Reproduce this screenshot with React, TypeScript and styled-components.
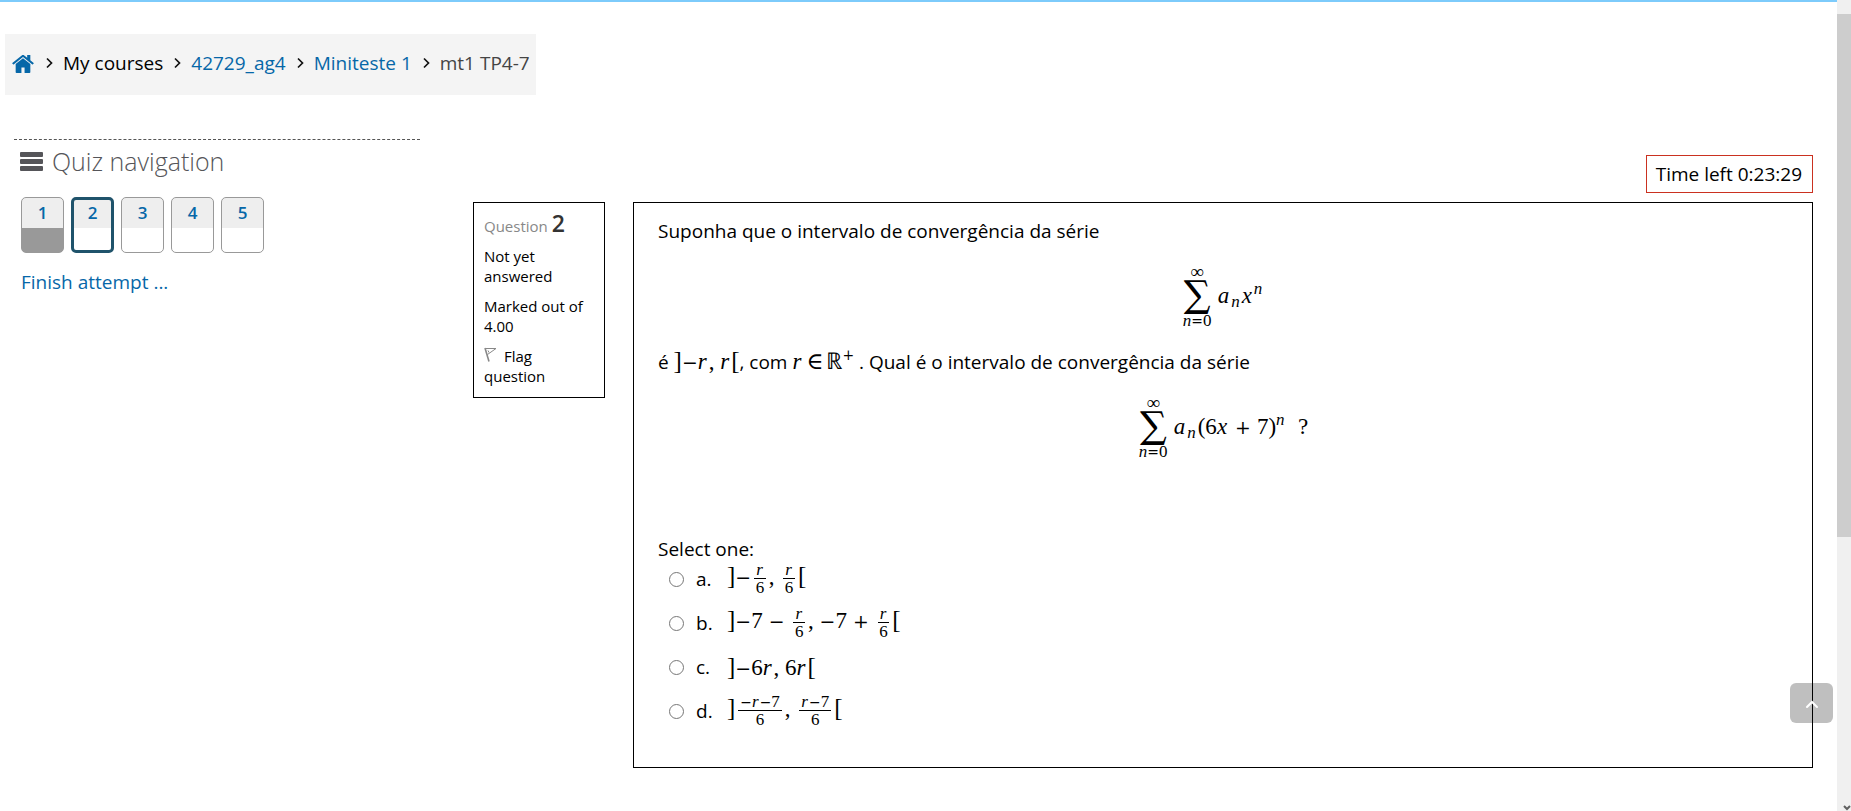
import React from "react";
import styled, { createGlobalStyle } from "styled-components";

const GlobalStyle = createGlobalStyle`
  *, *::before, *::after { box-sizing: border-box; }
  body {
    margin: 0;
    background: #fff;
    color: #1d1d1b;
    font-family: "Open Sans", "Noto Sans", sans-serif;
    font-size: 19px;
    line-height: 24px;
    overflow: hidden;
  }
  a { color: #0667a8; text-decoration: none; }
`;

const Shell = styled.div`
  display: grid;
  grid-template-columns: minmax(0, 1fr) 14px;
  min-height: 100vh;
`;

const Page = styled.div`
  border-top: 2px solid #7dcbfb;
  padding: 32px 5px 0;
`;

const Track = styled.div`
  display: grid;
  grid-template-rows: 14px 523fr 260fr 14px;
  height: 100vh;
  background: #f0f0f0;
`;

const Thumb = styled.div`
  grid-row: 2;
  background: #cdcdcd;
`;

const TrackArrow = styled.svg`
  grid-row: 4;
  width: 8px;
  height: 8px;
  justify-self: end;
  align-self: end;
`;

const Breadcrumb = styled.nav`
  display: inline-block;
  background: #f4f4f4;
  padding: 17px 6px 20px 7px;
  ol {
    display: flex;
    align-items: center;
    gap: 9px;
    margin: 0;
    padding: 0;
    list-style: none;
  }
  li {
    display: flex;
    align-items: center;
    gap: 9px;
    color: #000;
  }
  li:last-child > span { color: #444; }
`;

const HomeIcon = styled.svg`
  display: block;
  width: 22px;
  height: 19px;
  margin-right: 1px;
  fill: #0667a8;
`;

const Chevron = styled.svg`
  width: 10px;
  height: 12px;
  fill: none;
  stroke: #111;
  stroke-width: 1.7;
`;

const Columns = styled.div`
  display: grid;
  grid-template-columns: 406px minmax(0, 1fr);
  column-gap: 53px;
  padding: 44px 19px 0 9px;
`;

const Sidebar = styled.aside`
  border-top: 1px dashed #555;
  align-self: start;
`;

const SideTitle = styled.h2`
  display: flex;
  align-items: center;
  gap: 9px;
  margin: 4px 0 0 6px;
  color: #555559;
  font-size: 25px;
  font-weight: 300;
  line-height: 34px;
`;

const MenuIcon = styled.svg`
  width: 23px;
  height: 19px;
  fill: #555559;
`;

const NavButtons = styled.div`
  display: flex;
  gap: 7px;
  margin: 19px 0 0 7px;
`;

const NavButton = styled.a<{ $current?: boolean; $done?: boolean }>`
  width: 43px;
  height: 56px;
  border: ${(p) => (p.$current ? "3px solid #1f536b" : "1px solid #999")};
  border-radius: 5px;
  padding-top: ${(p) => (p.$current ? "1px" : "3px")};
  background: linear-gradient(
    #eee ${(p) => (p.$current ? "28px" : "30px")},
    ${(p) => (p.$done ? "#999" : "#fff")} 0
  );
  text-align: center;
  font-size: 17px;
  font-weight: 600;
`;

const FinishLink = styled.a`
  display: inline-block;
  margin: 17px 0 0 7px;
`;

const Main = styled.main`
  padding-top: 16px;
`;

const TimerRow = styled.div`
  display: flex;
  justify-content: flex-end;
`;

const Timer = styled.div`
  border: 1px solid #ca3120;
  padding: 6px 10px 6px 9px;
  color: #000;
`;

const Question = styled.section`
  display: grid;
  grid-template-columns: 132px minmax(0, 1fr);
  column-gap: 28px;
  align-items: start;
  margin-top: 9px;
`;

const Info = styled.div`
  border: 1px solid #000;
  padding: 7px 10px 11px;
  font-size: 15px;
  line-height: 20px;
  color: #000;
  p { margin: 0 0 10px; }
  p:last-child { margin: 0; }
`;

const InfoTitle = styled.h3`
  margin: 0 0 7px;
  color: #888;
  font-size: 15px;
  font-weight: 400;
  line-height: 26px;
  b {
    color: #333;
    font-size: 23px;
    font-weight: 600;
  }
`;

const FlagIcon = styled.svg`
  width: 14px;
  height: 15px;
  margin-right: 6px;
`;

const Body = styled.div`
  border: 1px solid #000;
  padding: 16px 24px 34px;
  color: #000;
`;

const Line = styled.p`
  margin: 0;
  line-height: 24px;
`;

const MathText = styled.span`
  font-family: "Liberation Serif", serif;
  font-size: 23px;
  line-height: 24px;
  white-space: pre;
  i { padding-right: 2px; }
  sub, sup {
    font-size: 17px;
    line-height: 0;
  }
  sub { vertical-align: -4px; }
  sup { vertical-align: 9px; }
`;

const Formula = styled.div`
  display: flex;
  align-items: center;
  justify-content: center;
  height: 62px;
  margin: 22px 0;
`;

const SumStack = styled.span`
  display: inline-flex;
  flex-direction: column;
  align-items: center;
  width: 31px;
  margin-right: 5px;
  font-family: "Liberation Serif", serif;
  font-size: 17px;
  line-height: 12px;
`;

const Infinity = styled.span`
  font-size: 19px;
  line-height: 14px;
`;

const Sigma = styled.span`
  font-family: "DejaVu Math TeX Gyre", "DejaVu Serif", serif;
  font-size: 32px;
  line-height: 36px;
`;

const Sign = styled.span`
  font-family: "DejaVu Serif", serif;
  font-size: 0.82em;
  line-height: 0;
`;

const Op = styled(Sign)`
  padding: 0 6px;
`;

const Element = styled.span`
  padding: 0 3px;
  font-family: "DejaVu Serif", serif;
  font-size: 1em;
  line-height: 0;
`;

const Bracket = styled.span`
  font-size: 25px;
  line-height: 24px;
`;

const FracBox = styled.span`
  display: inline-flex;
  flex-direction: column;
  align-items: center;
  vertical-align: middle;
  margin: 0 3px;
  font-size: 17px;
  line-height: 14px;
  i { padding-right: 1px; }
  span.top {
    align-self: stretch;
    border-bottom: 1px solid #000;
    padding: 0 2px 1px;
    text-align: center;
  }
  span.bottom { padding-top: 2px; }
`;

const Answers = styled.fieldset`
  border: 0;
  margin: 79px 0 0;
  padding: 0;
  legend { padding: 0; }
`;

const Option = styled.label`
  display: flex;
  align-items: center;
  height: 44px;
  padding-left: 11px;
  input {
    width: 15px;
    height: 15px;
    margin: 0 12px 0 0;
  }
`;

const OptionLetter = styled.span`
  width: 31px;
`;

const Options = styled.div`
  margin-top: -4px;
`;

const BackToTop = styled.button`
  position: fixed;
  right: 18px;
  bottom: 88px;
  display: flex;
  align-items: center;
  justify-content: center;
  width: 43px;
  height: 40px;
  border: 0;
  border-radius: 6px;
  padding: 3px 0 0;
  background: rgba(0, 0, 0, 0.25);
`;

const Sum = () => (
  <SumStack>
    <Infinity>∞</Infinity>
    <Sigma>∑</Sigma>
    <span><i>n</i><Sign>=</Sign>0</span>
  </SumStack>
);

const Frac = ({ top }: { top: React.ReactNode }) => (
  <FracBox>
    <span className="top">{top}</span>
    <span className="bottom">6</span>
  </FracBox>
);

const Sep = () => (
  <Chevron viewBox="0 0 10 12" aria-hidden="true">
    <path d="M3 1.500l4.500 4.500-4.500 4.500" />
  </Chevron>
);

const r = <i>r</i>;
const minus = <Sign>−</Sign>;

const options: { letter: string; math: React.ReactNode }[] = [
  { letter: "a", math: <>{minus}<Frac top={r} />, <Frac top={r} /></> },
  { letter: "b", math: <>{minus}7<Op>−</Op><Frac top={r} />, {minus}7<Op>+</Op><Frac top={r} /></> },
  { letter: "c", math: <>{minus}6{r}, 6{r}</> },
  { letter: "d", math: <><Frac top={<>{minus}{r}{minus}7</>} />, <Frac top={<>{r}{minus}7</>} /></> },
];

export default function App() {
  return (
    <Shell>
      <GlobalStyle />
      <Page>
        <Breadcrumb aria-label="Breadcrumb">
          <ol>
            <li>
              <a href="#home" aria-label="Home">
                <HomeIcon viewBox="0 0 21 19" preserveAspectRatio="none">
                  <path d="M10.5 4.2L3.5 10v8.2c0 .4.3.8.8.8H9v-5.5h3V19h4.700c.5 0 .8-.4.8-.8V10z" />
                  <path d="M20.700 8.900L17.500 6.200V1h-3v2.700L11.700 1.400c-.7-.6-1.700-.6-2.400 0L.3 8.900c-.2.2-.2.4 0 .6l.7.8c.2.2.4.2.6.1l8.900-7.400 8.900 7.400c.2.1.4.1.6-.1l.7-.8c.2-.2.2-.4 0-.6z" />
                </HomeIcon>
              </a>
              <Sep />
            </li>
            <li><span>My courses</span><Sep /></li>
            <li><a href="#course">42729_ag4</a><Sep /></li>
            <li><a href="#section">Miniteste 1</a><Sep /></li>
            <li><span>mt1 TP4-7</span></li>
          </ol>
        </Breadcrumb>
        <Columns>
          <Sidebar>
            <SideTitle>
              <MenuIcon viewBox="0 0 23 19" aria-hidden="true">
                <rect y="0" width="23" height="5" rx="1" />
                <rect y="7" width="23" height="5" rx="1" />
                <rect y="14" width="23" height="5" rx="1" />
              </MenuIcon>
              Quiz navigation
            </SideTitle>
            <NavButtons>
              {[1, 2, 3, 4, 5].map((n) => (
                <NavButton key={n} href={`#q${n}`} $done={n === 1} $current={n === 2}>{n}</NavButton>
              ))}
            </NavButtons>
            <FinishLink href="#finish">Finish attempt ...</FinishLink>
          </Sidebar>
          <Main>
            <TimerRow><Timer>Time left 0:23:29</Timer></TimerRow>
            <Question>
              <Info>
                <InfoTitle>Question <b>2</b></InfoTitle>
                <p>Not yet answered</p>
                <p>Marked out of 4.00</p>
                <p>
                  <FlagIcon viewBox="0 0 14 15" fill="none" stroke="#888" aria-hidden="true">
                    <path d="M1 1l4 13.500" strokeWidth="1.600" />
                    <path d="M1.500 1.500h10.500L3.500 7.500M4 3.500l1 2" />
                  </FlagIcon>
                  Flag question
                </p>
              </Info>
              <Body>
                <Line>Suponha que o intervalo de convergência da série</Line>
                <Formula>
                  <Sum />
                  <MathText><i>a</i><sub><i>n</i></sub><i>x</i><sup><i>n</i></sup></MathText>
                </Formula>
                <Line>
                  é <MathText><Bracket>]</Bracket>{minus}{r}, {r}<Bracket>[</Bracket></MathText>, com{" "}
                  <MathText>{r}<Element>∈</Element>ℝ<sup><Sign>+</Sign></sup></MathText> . Qual é o intervalo de convergência da série
                </Line>
                <Formula>
                  <Sum />
                  <MathText><i>a</i><sub><i>n</i></sub>(6<i>x</i><Op>+</Op>7)<sup><i>n</i></sup>  ?</MathText>
                </Formula>
                <Answers>
                  <legend>Select one:</legend>
                  <Options>
                    {options.map((o) => (
                      <Option key={o.letter}>
                        <input type="radio" name="answer" />
                        <OptionLetter>{o.letter}.</OptionLetter>
                        <MathText><Bracket>]</Bracket>{o.math}<Bracket>[</Bracket></MathText>
                      </Option>
                    ))}
                  </Options>
                </Answers>
              </Body>
            </Question>
          </Main>
        </Columns>
      </Page>
      <Track aria-hidden="true">
        <Thumb />
        <TrackArrow viewBox="0 0 8 8" fill="none" stroke="#606060" strokeWidth="2">
          <path d="M1 3l3 3 3-3" />
        </TrackArrow>
      </Track>
      <BackToTop type="button" aria-label="Back to top">
        <svg width="14" height="9" viewBox="0 0 14 9" fill="none" stroke="#fff" strokeWidth="2" strokeLinecap="round">
          <path d="M2 7l5-5 5 5" />
        </svg>
      </BackToTop>
    </Shell>
  );
}
